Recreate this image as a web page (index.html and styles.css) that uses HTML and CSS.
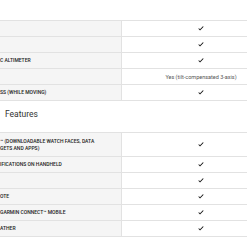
FILE: index.html
```html
<!DOCTYPE html>
<html lang="en">
<head>
    <meta charset="UTF-8">
    <meta name="viewport" content="width=device-width, initial-scale=1.0">
    <title>Specs</title>
    <link rel="stylesheet" href="styles.css">
</head>
<body>

<div class="page">
    <div class="specs">
        <div class="row">
            <div class="label"></div>
            <div class="value"><svg class="tick" viewBox="0 0 10 8"><path d="M0.6 4.4 L3.4 7.2 L9.4 1.2 L8.2 0.4 L3.4 5.2 L1.6 3.4 Z"/></svg></div>
        </div>
        <div class="row">
            <div class="label"></div>
            <div class="value"><svg class="tick" viewBox="0 0 10 8"><path d="M0.6 4.4 L3.4 7.2 L9.4 1.2 L8.2 0.4 L3.4 5.2 L1.6 3.4 Z"/></svg></div>
        </div>
        <div class="row">
            <div class="label">C ALTIMETER</div>
            <div class="value"><svg class="tick" viewBox="0 0 10 8"><path d="M0.6 4.4 L3.4 7.2 L9.4 1.2 L8.2 0.4 L3.4 5.2 L1.6 3.4 Z"/></svg></div>
        </div>
        <div class="row">
            <div class="label"></div>
            <div class="value">Yes (tilt-compensated 3-axis)</div>
        </div>
        <div class="row">
            <div class="label">SS (WHILE MOVING)</div>
            <div class="value"><svg class="tick" viewBox="0 0 10 8"><path d="M0.6 4.4 L3.4 7.2 L9.4 1.2 L8.2 0.4 L3.4 5.2 L1.6 3.4 Z"/></svg></div>
        </div>
    </div>

    <h3 class="section-title">Features</h3>

    <div class="specs">
        <div class="row tall">
            <div class="label">&trade; (DOWNLOADABLE WATCH FACES, DATA<br>GETS AND APPS)</div>
            <div class="value"><svg class="tick" viewBox="0 0 10 8"><path d="M0.6 4.4 L3.4 7.2 L9.4 1.2 L8.2 0.4 L3.4 5.2 L1.6 3.4 Z"/></svg></div>
        </div>
        <div class="row">
            <div class="label">IFICATIONS ON HANDHELD</div>
            <div class="value"><svg class="tick" viewBox="0 0 10 8"><path d="M0.6 4.4 L3.4 7.2 L9.4 1.2 L8.2 0.4 L3.4 5.2 L1.6 3.4 Z"/></svg></div>
        </div>
        <div class="row">
            <div class="label"></div>
            <div class="value"><svg class="tick" viewBox="0 0 10 8"><path d="M0.6 4.4 L3.4 7.2 L9.4 1.2 L8.2 0.4 L3.4 5.2 L1.6 3.4 Z"/></svg></div>
        </div>
        <div class="row">
            <div class="label">OTE</div>
            <div class="value"><svg class="tick" viewBox="0 0 10 8"><path d="M0.6 4.4 L3.4 7.2 L9.4 1.2 L8.2 0.4 L3.4 5.2 L1.6 3.4 Z"/></svg></div>
        </div>
        <div class="row">
            <div class="label">GARMIN CONNECT&trade; MOBILE</div>
            <div class="value"><svg class="tick" viewBox="0 0 10 8"><path d="M0.6 4.4 L3.4 7.2 L9.4 1.2 L8.2 0.4 L3.4 5.2 L1.6 3.4 Z"/></svg></div>
        </div>
        <div class="row">
            <div class="label">ATHER</div>
            <div class="value"><svg class="tick" viewBox="0 0 10 8"><path d="M0.6 4.4 L3.4 7.2 L9.4 1.2 L8.2 0.4 L3.4 5.2 L1.6 3.4 Z"/></svg></div>
        </div>
    </div>
</div>

</body>
</html>
```

FILE: styles.css
```css
body {
    margin: 0;
    background-color: #fff;
    font-family: Roboto, "Liberation Sans", sans-serif;
    color: #333;
    overflow: hidden;
}
.page {
    width: 280px;
    padding-top: 20px;
}
.specs {
    border-top: 1px solid #e2e2e2;
}
.row {
    display: grid;
    grid-template-columns: 122px 158px;
    min-height: 15px;
    border-bottom: 1px solid #e2e2e2;
}
.row.tall {
    min-height: 23px;
}
.label {
    display: flex;
    align-items: center;
    background-color: #f5f5f5;
    border-right: 1px solid #e2e2e2;
    font-size: 5px;
    font-weight: 500;
    line-height: 7px;
    color: #222;
    white-space: nowrap;
}
.value {
    display: flex;
    align-items: center;
    justify-content: center;
    font-size: 5.5px;
    color: #555;
}
.tick {
    width: 6px;
    height: 5px;
    fill: #111;
}
.section-title {
    margin: 8px 0 13px 5px;
    font-size: 8.5px;
    font-weight: 400;
    line-height: 10px;
    color: #333;
}
```
